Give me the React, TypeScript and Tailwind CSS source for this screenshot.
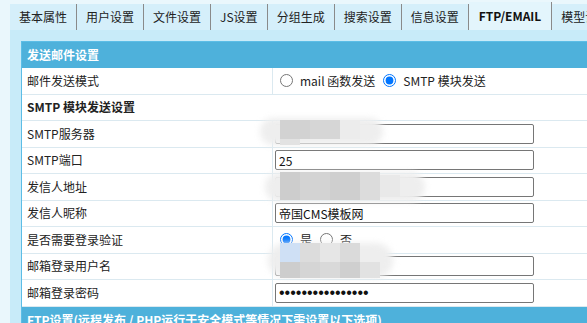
import React from 'react'

const tabs = ['基本属性', '用户设置', '文件设置', 'JS设置', '分组生成', '搜索设置', '信息设置']

function Row({ label, children }: { label: string; children?: React.ReactNode }) {
  return (
    <div className="flex h-[26.5px] border-b border-[#dbe9f0]">
      <div className="flex w-[251px] shrink-0 items-center border-r border-[#dbe9f0] pl-[5px]">{label}</div>
      <div className="flex flex-1 items-center pl-[2px]">{children}</div>
    </div>
  )
}

function Field({ value = '' }: { value?: string }) {
  return (
    <input
      type="text"
      defaultValue={value}
      className="h-[20px] w-[259px] rounded-[2px] border border-[#767676] bg-white px-[3px] text-[12px] text-[#111] outline-none"
    />
  )
}

function Blob({ x, y, w, h, cells }: { x: number; y: number; w: number; h: number; cells: [number, number, number, number, string][] }) {
  return (
    <div className="pointer-events-none absolute" style={{ left: x, top: y, width: w, height: h }}>
      <div className="absolute inset-0 rounded-full bg-[#eeeeee] blur-[3px]" />
      {cells.map(([cx, cy, cw, ch, c], i) => (
        <div key={i} className="absolute" style={{ left: cx - x, top: cy - y, width: cw, height: ch, background: c }} />
      ))}
    </div>
  )
}

export default function App() {
  return (
    <div className="relative h-[323px] w-[587px] overflow-hidden bg-[#eaf7fc] font-['Noto_Sans_CJK_SC',sans-serif] text-[12px] text-[#222]">
      <div className="ml-[10px] w-[1000px]">
        {/* Tabs */}
        <div className="flex h-[30px] items-end">
          {tabs.map(t => (
            <div key={t} className="flex h-[26px] items-center border-r border-[#8a8a8a] bg-[#d5effa] px-[9px]">
              {t}
            </div>
          ))}
          <div className="flex h-[28px] items-center border-r border-[#8a8a8a] bg-[#e3f5fc] px-[10px] font-bold text-[#111]">
            FTP/EMAIL
          </div>
          <div className="flex h-[26px] items-center bg-[#d5effa] px-[9px]">模型设置</div>
        </div>

        {/* Panel */}
        <div className="bg-[#c8ebf9] pl-[11px] pt-[11px]">
          <div className="border-l border-t border-[#5cbde6] bg-white">
            <div className="flex h-[26px] items-center bg-[#4eb1db] pl-[5px] font-bold text-white">发送邮件设置</div>
            <Row label="邮件发送模式">
              <label className="ml-[5px] flex items-center">
                <input type="radio" name="mode" className="m-0 h-[13px] w-[13px]" />
                <span className="ml-[7px]">mail 函数发送</span>
              </label>
              <label className="ml-[8px] flex items-center">
                <input type="radio" name="mode" defaultChecked className="m-0 h-[13px] w-[13px]" />
                <span className="ml-[7px]">SMTP 模块发送</span>
              </label>
            </Row>
            <div className="flex h-[26.5px] items-center border-b border-[#dbe9f0] pl-[5px] font-bold">SMTP 模块发送设置</div>
            <Row label="SMTP服务器"><Field /></Row>
            <Row label="SMTP端口"><Field value="25" /></Row>
            <Row label="发信人地址"><Field /></Row>
            <Row label="发信人昵称"><Field value="帝国CMS模板网" /></Row>
            <Row label="是否需要登录验证">
              <label className="ml-[5px] flex items-center">
                <input type="radio" name="auth" defaultChecked className="m-0 h-[13px] w-[13px]" />
                <span className="ml-[7px]">是</span>
              </label>
              <label className="ml-[8px] flex items-center">
                <input type="radio" name="auth" className="m-0 h-[13px] w-[13px]" />
                <span className="ml-[7px]">否</span>
              </label>
            </Row>
            <Row label="邮箱登录用户名"><Field /></Row>
            <Row label="邮箱登录密码">
              <input
                type="password"
                defaultValue="1234567890123456"
                className="h-[20px] w-[259px] rounded-[2px] border border-[#767676] bg-white px-[3px] font-['Liberation_Sans',sans-serif] text-[16px] text-[#111] outline-none"
              />
            </Row>
            <div className="flex h-[26px] items-center bg-[#4eb1db] pl-[5px] font-bold text-white">
              FTP设置(远程发布 / PHP运行于安全模式等情况下需设置以下选项)
            </div>
          </div>
        </div>
      </div>

      {/* privacy blur patches */}
      <Blob
        x={260} y={118} w={123} h={27}
        cells={[
          [280, 120, 30, 19, '#d2d2d2'],
          [310, 120, 30, 19, '#d6d6d6'],
          [280, 139, 20, 6, '#e2e2e2'],
          [340, 120, 20, 19, '#ececec'],
        ]}
      />
      <Blob
        x={265} y={172} w={160} h={30}
        cells={[
          [280, 172, 20, 28, '#cdcdcd'],
          [300, 172, 30, 28, '#d3d3d3'],
          [330, 172, 30, 28, '#cfcfcf'],
          [360, 172, 20, 28, '#dcdcdc'],
          [380, 175, 20, 22, '#e9e9e9'],
        ]}
      />
      <Blob
        x={268} y={243} w={125} h={35}
        cells={[
          [280, 243, 20, 19, '#cfe0f5'],
          [300, 243, 20, 19, '#dcdcdc'],
          [320, 243, 20, 19, '#e6e6e6'],
          [340, 243, 20, 19, '#dadada'],
          [280, 262, 20, 16, '#cdcdcd'],
          [300, 262, 20, 16, '#d5d5d5'],
          [320, 262, 20, 16, '#d9d9d9'],
          [340, 262, 20, 16, '#cfcfcf'],
          [360, 262, 20, 16, '#e2e2e2'],
        ]}
      />
    </div>
  )
}
